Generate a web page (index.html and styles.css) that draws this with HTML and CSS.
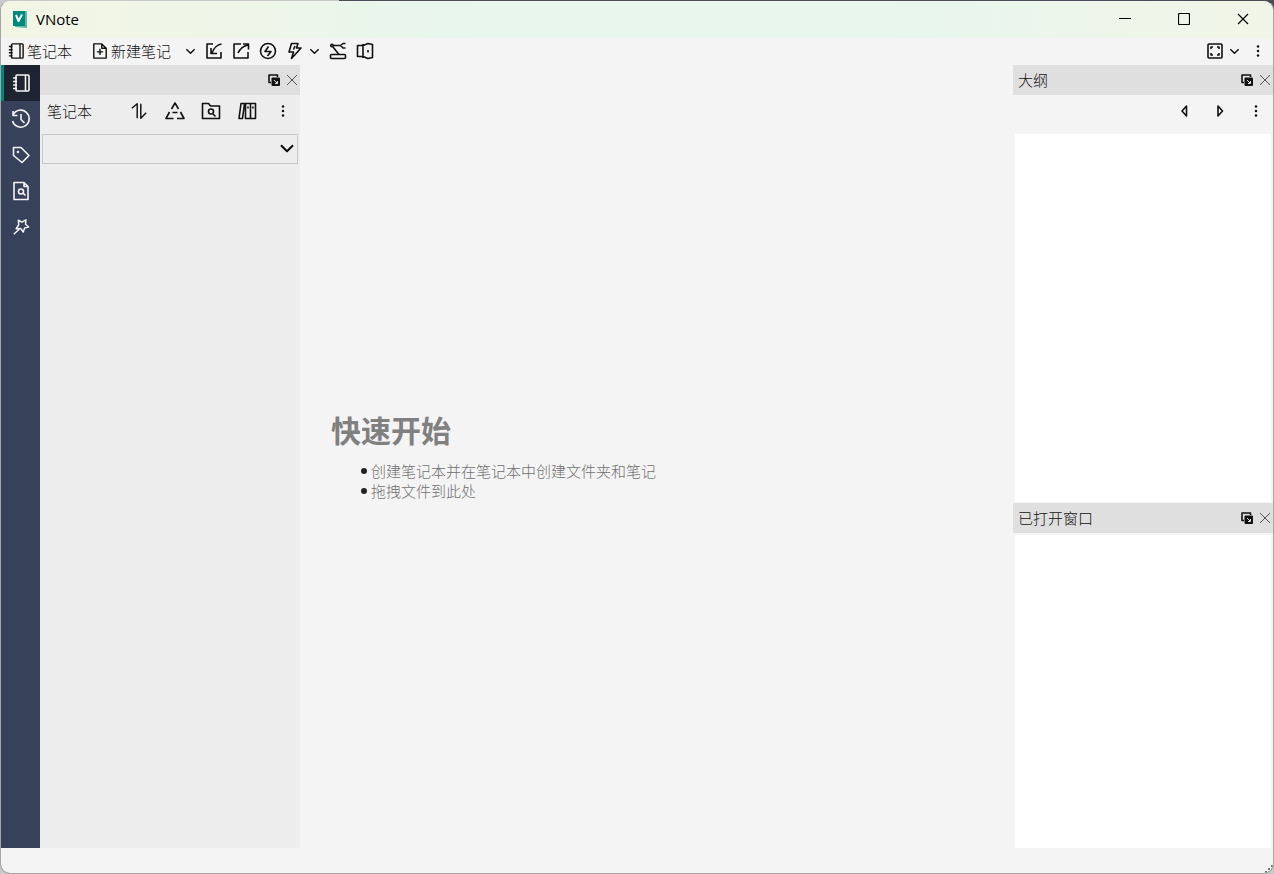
FILE: index.html
```html
<!DOCTYPE html>
<html lang="zh-CN">
<head>
<meta charset="utf-8">
<title>VNote</title>
<link rel="stylesheet" href="styles.css">
</head>
<body>
<svg class="defs" aria-hidden="true">
  <symbol id="notebook" viewBox="0 0 18 18"><rect x="4" y="1" width="13" height="16" rx="1"/><path d="M13.500 1v16M1 4h4M1 7.500h4M1 11h4M1 14.500h4"/></symbol>
  <symbol id="new-note" viewBox="0 0 18 18"><path d="M2 1h9l5 5v11H2zM11 1v5h5M9 6.500v7M5.500 10h7"/></symbol>
  <symbol id="chevron" viewBox="0 0 12 12"><path d="M1.500 4L6 8.500 10.500 4"/></symbol>
  <symbol id="import" viewBox="0 0 18 18"><path d="M8 2H2v14h14v-6M16.500 2C11 3 9 6 7 11M6 6v5.500h6"/></symbol>
  <symbol id="export" viewBox="0 0 18 18"><path d="M9 2H2v14h14v-6M6 11C8 7 11 4 16 3M11 2h5.500v5.500"/></symbol>
  <symbol id="flash" viewBox="0 0 18 18"><circle cx="9" cy="9" r="7.500"/><path d="M9.500 4.500L6 9.500h6l-3.500 4.500"/></symbol>
  <symbol id="bolt" viewBox="0 0 18 18"><path d="M5.500 1.500H12L10.500 6H15L5.500 16.500 7.500 10H3zM9 4L7.500 7.500"/></symbol>
  <symbol id="robot" viewBox="0 0 18 18"><path d="M4 3.500h7M4 5l6 7.500M16.500 1.500H14L11.500 3.500 14 6h2.500"/><circle cx="3" cy="3.500" r="1.250"/><rect x="1.500" y="12.500" width="15" height="4" rx="1"/></symbol>
  <symbol id="book" viewBox="0 0 18 18"><path d="M7 3.500H1.500v11H7M7 3.500L12 1.500l4.500 1v13l-4.500 1-5-2zM7 2v14M12 8v2.500"/></symbol>
  <symbol id="expand" viewBox="0 0 18 18"><rect x="2" y="2" width="14" height="14" rx="1"/><path d="M5 7V5h2M11 5h2v2M13 11v2h-2M7 13H5v-2"/></symbol>
  <symbol id="dots" viewBox="0 0 18 18"><g class="solid"><circle cx="9" cy="4.500" r="1.250"/><circle cx="9" cy="9" r="1.250"/><circle cx="9" cy="13.500" r="1.250"/></g></symbol>
  <symbol id="history" viewBox="0 0 20 20"><path d="M2 6a8.500 8.500 0 1 1-.5 6M2 2v4.500h4.500M10 5v5.500l3.500 3.500"/></symbol>
  <symbol id="tag" viewBox="0 0 20 20"><path d="M2.500 2.500H10l8 8-7 7-8.500-7z"/><circle cx="7" cy="7" r=".5"/></symbol>
  <symbol id="search-file" viewBox="0 0 20 20"><path d="M3 1.500h10l4 4v13H3zM13 1.500v4h4M12 12l2.500 2.500"/><circle cx="10" cy="10.500" r="2.500"/></symbol>
  <symbol id="wand" viewBox="0 0 20 20"><path d="M7 2.500l4 2 4.500-2.500-.5 5 3.500 3-4.500 1-1.500 4.500-3-4-5 .5 3-4.500zM8.500 12l-6.500 6"/></symbol>
  <symbol id="sort" viewBox="0 0 20 20"><path d="M2 7l6-5v16M12 2v16l6-6"/></symbol>
  <symbol id="recycle" viewBox="0 0 20 20"><path d="M6.500 8L10 2l3.500 6M15.500 11l3.500 6.500h-7M8.500 17.500H1L4.500 11M7.500 11.500h5"/></symbol>
  <symbol id="search-folder" viewBox="0 0 20 20"><path d="M1.500 2.500h6l2 2.500h9v12.500h-17zM12 13l2.500 2.500"/><circle cx="10" cy="10.500" r="2.500"/></symbol>
  <symbol id="shelf" viewBox="0 0 20 20"><path d="M4 2.500h3.500l-2 15H2zM8.500 2.500h5v15h-5zM13.500 2.500h5v15h-5zM11 5.500v2M16 5.500v2"/></symbol>
  <symbol id="float" viewBox="0 0 12 12"><path d="M3 8.500H1V1h8.500v2"/><rect class="solid" x="3.500" y="3.500" width="8.500" height="8.500" rx="1"/><path class="light" d="M6 6l3 3M9.500 7v2.500H7"/></symbol>
  <symbol id="cross" viewBox="0 0 12 12"><path d="M1 1l10 10M11 1L1 11"/></symbol>
  <symbol id="prev" viewBox="0 0 18 18"><path d="M11.500 4v10L7 9z"/></symbol>
  <symbol id="next" viewBox="0 0 18 18"><path d="M7 4v10l4.500-5z"/></symbol>
  <symbol id="minimize" viewBox="0 0 12 12"><path d="M0 5.500h12"/></symbol>
  <symbol id="maximize" viewBox="0 0 12 12"><rect x=".5" y=".5" width="11" height="11" rx="1"/></symbol>
</svg>
<div class="window">
  <header class="titlebar">
    <svg class="logo" viewBox="0 0 16 18" aria-hidden="true"><path class="logo-back" d="M3 2l12-1v17L3 17z"/><path class="logo-front" d="M1 1h12v15H1z"/><path class="logo-mark" d="M4 5l2.500 6L10 4.500"/></svg>
    <h1 class="title">VNote</h1>
    <div class="window-controls">
      <button aria-label="最小化"><svg class="i12"><use href="#minimize"/></svg></button>
      <button aria-label="最大化"><svg class="i12"><use href="#maximize"/></svg></button>
      <button aria-label="关闭"><svg class="i12"><use href="#cross"/></svg></button>
    </div>
  </header>
  <div class="toolbar">
    <button class="labelled"><svg class="i16"><use href="#notebook"/></svg>笔记本</button>
    <button class="labelled create"><svg class="i16"><use href="#new-note"/></svg>新建笔记</button>
    <button class="drop wide" aria-label="新建选项"><svg class="i12"><use href="#chevron"/></svg></button>
    <button class="tool" aria-label="导入"><svg class="i18"><use href="#import"/></svg></button>
    <button class="tool" aria-label="导出"><svg class="i18"><use href="#export"/></svg></button>
    <button class="tool" aria-label="快速访问"><svg class="i18"><use href="#flash"/></svg></button>
    <button class="tool" aria-label="闪念"><svg class="i18"><use href="#bolt"/></svg></button>
    <button class="drop" aria-label="闪念选项"><svg class="i12"><use href="#chevron"/></svg></button>
    <button class="tool robot" aria-label="任务"><svg class="i18"><use href="#robot"/></svg></button>
    <button class="tool" aria-label="词典"><svg class="i18"><use href="#book"/></svg></button>
    <span class="spacer"></span>
    <button class="tool" aria-label="展开"><svg class="i18"><use href="#expand"/></svg></button>
    <button class="drop" aria-label="展开选项"><svg class="i12"><use href="#chevron"/></svg></button>
    <button class="tool menu" aria-label="菜单"><svg class="i18"><use href="#dots"/></svg></button>
  </div>
  <div class="workspace">
    <nav class="sidebar" aria-label="导航">
      <button class="active" aria-label="笔记本"><svg class="i18"><use href="#notebook"/></svg></button>
      <button aria-label="历史"><svg class="i20"><use href="#history"/></svg></button>
      <button aria-label="标签"><svg class="i20"><use href="#tag"/></svg></button>
      <button aria-label="搜索"><svg class="i20"><use href="#search-file"/></svg></button>
      <button aria-label="片段"><svg class="i18"><use href="#wand"/></svg></button>
    </nav>
    <aside class="dock left">
      <div class="dock-title"><span class="spacer"></span>
        <button aria-label="浮动"><svg class="i12"><use href="#float"/></svg></button>
        <button class="close" aria-label="关闭"><svg class="i12"><use href="#cross"/></svg></button>
      </div>
      <div class="dock-tools">
        <label class="dock-label" for="notebooks">笔记本</label>
        <span class="spacer"></span>
        <button aria-label="排序"><svg class="i18"><use href="#sort"/></svg></button>
        <button aria-label="回收站"><svg class="i20"><use href="#recycle"/></svg></button>
        <button aria-label="扫描"><svg class="i20"><use href="#search-folder"/></svg></button>
        <button aria-label="管理"><svg class="i20"><use href="#shelf"/></svg></button>
        <button aria-label="更多"><svg class="i18"><use href="#dots"/></svg></button>
      </div>
      <div class="select-box">
        <select id="notebooks"><option></option></select>
        <svg class="i16 select-arrow"><use href="#chevron"/></svg>
      </div>
    </aside>
    <main class="content">
      <h2>快速开始</h2>
      <ul>
        <li>创建笔记本并在笔记本中创建文件夹和笔记</li>
        <li>拖拽文件到此处</li>
      </ul>
    </main>
    <aside class="dock right">
      <section class="panel outline">
        <div class="dock-title"><h3>大纲</h3><span class="spacer"></span>
          <button aria-label="浮动"><svg class="i12"><use href="#float"/></svg></button>
          <button class="close" aria-label="关闭"><svg class="i12"><use href="#cross"/></svg></button>
        </div>
        <div class="dock-tools"><span class="spacer"></span>
          <button aria-label="上一级"><svg class="i18"><use href="#prev"/></svg></button>
          <button aria-label="下一级"><svg class="i18"><use href="#next"/></svg></button>
          <button aria-label="更多"><svg class="i18"><use href="#dots"/></svg></button>
        </div>
        <div class="list"></div>
      </section>
      <section class="panel opened">
        <div class="dock-title"><h3>已打开窗口</h3><span class="spacer"></span>
          <button aria-label="浮动"><svg class="i12"><use href="#float"/></svg></button>
          <button class="close" aria-label="关闭"><svg class="i12"><use href="#cross"/></svg></button>
        </div>
        <div class="list"></div>
      </section>
    </aside>
  </div>
  <footer class="statusbar"><svg class="grip" viewBox="0 0 8 8" aria-hidden="true"><path d="M6 0h2v2H6zM3 3h2v2H3zM6 3h2v2H6zM0 6h2v2H0zM3 6h2v2H3zM6 6h2v2H6z"/></svg></footer>
</div>
</body>
</html>
```
FILE: styles.css
```css
* { box-sizing: border-box; }
html { height: 100%; }
body {
  height: 100%;
  margin: 0;
  background: linear-gradient(90deg, #c9c9c9 0 339px, #4c4d57 339px) top / 100% 30px no-repeat, #c9c9c9;
  font: 300 15px/20px "Noto Sans", "Noto Sans CJK SC", sans-serif;
  color: #111;
}
.defs { position: absolute; width: 0; height: 0; }
svg { display: block; flex: none; fill: none; stroke: currentColor; stroke-width: 1.6; stroke-linejoin: round; }
.solid { fill: currentColor; stroke: none; }
.light { stroke: #e0e0e0; stroke-width: 1; }
.i12 { width: 12px; height: 12px; }
.i16 { width: 16px; height: 16px; }
.i18 { width: 18px; height: 18px; }
.i20 { width: 20px; height: 20px; }
button {
  display: flex;
  align-items: center;
  justify-content: center;
  flex: none;
  padding: 0;
  border: 0;
  background: none;
  color: inherit;
  font: inherit;
}
h1, h2, h3, ul { margin: 0; font-weight: inherit; font-size: inherit; }
.spacer { flex: 1; }
.window {
  display: flex;
  flex-direction: column;
  height: 100%;
  border: 1px solid #a6a6a6;
  border-top-color: transparent;
  border-radius: 10px;
  overflow: hidden;
  background: #f4f4f4 padding-box;
}
.titlebar {
  display: flex;
  align-items: center;
  height: 37px;
  padding: 0 1px 1px 11px;
  background: linear-gradient(90deg, #f3f5e4, #e8f6ed 38%, #e8f6ed 70%, #f1f5e7);
  color: #000;
}
.logo { width: 16px; height: 18px; stroke: none; }
.logo-back { fill: #5eb5aa; }
.logo-front { fill: #00897b; }
.logo-mark { fill: none; stroke: #fff; stroke-width: 2; }
.title { flex: 1; margin-left: 8px; font: 400 15px/20px "Open Sans", "Noto Sans", sans-serif; }
.window-controls { display: flex; height: 100%; }
.window-controls button { width: 59px; }
.window-controls svg { stroke-width: 1.2; }
.toolbar { display: flex; height: 27px; padding: 0 2px 1px 7px; }
.labelled { gap: 3px; }
.create { margin-left: 20px; }
.drop { width: 12px; }
.drop svg { width: 11px; }
.wide { width: 20px; margin-left: 9px; }
.tool { width: 27px; }
.robot { margin-left: 4px; }
.menu { margin-left: 4px; }
.workspace { display: flex; flex: 1; min-height: 0; }
.sidebar { width: 39px; background: #37415a; color: #f4f4f4; }
.sidebar button { width: 100%; height: 36px; }
.sidebar .active { border-left: 3px solid #00897b; padding-right: 2px; background: #1d2330; }
.dock { width: 260px; flex: none; }
.left { background: #ededed; }
.dock-title {
  display: flex;
  align-items: center;
  height: 30px;
  padding: 0 2px 0 5px;
  gap: 6px;
  background: #dfdfdf;
}
.dock-title .close { color: #555; }
.close svg { stroke-width: 1; }
.dock-tools { display: flex; height: 39px; margin-right: -1px; padding: 0 0 7px 7px; }
.right .dock-tools { padding-left: 0; }
.dock-tools button { width: 36px; }
.dock-label { align-self: center; }
.select-box { position: relative; margin: 0 2px; }
select {
  display: block;
  width: 100%;
  height: 30px;
  appearance: none;
  border: 1px solid #c8c8c8;
  border-radius: 0;
  background: #ededed;
}
.select-arrow { position: absolute; right: 3px; top: 6px; pointer-events: none; }
.content { display: flex; flex: 1; flex-direction: column; justify-content: center; padding: 0 0 3px 31px; }
.content h2 { font-size: 30px; line-height: 44px; font-weight: 700; color: #808080; }
.content ul { margin-top: 8px; padding-left: 40px; list-style: none; color: #707070; }
.content li { display: flex; align-items: center; }
.content li::before { content: ""; width: 6px; height: 6px; margin: 0 4px 0 -10px; border-radius: 50%; background: #222; }
.right { display: flex; flex-direction: column; }
.panel { display: flex; flex-direction: column; }
.outline { flex: 438; }
.opened { flex: 345; }
.list { flex: 1; margin: 0 2px; background: #fff; }
.outline .list { margin-bottom: 1px; }
.opened .list { margin-top: 2px; }
.statusbar { display: flex; justify-content: flex-end; align-items: flex-end; height: 25px; }
.grip { width: 8px; height: 8px; fill: #777; stroke: none; }
```
